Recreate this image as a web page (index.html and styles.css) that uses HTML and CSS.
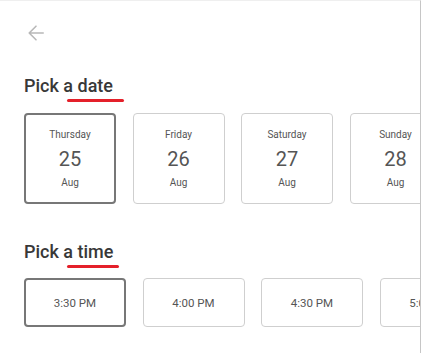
FILE: index.html
```html
<!DOCTYPE html>
<html lang="en">
<head>
    <meta charset="UTF-8">
    <meta name="viewport" content="width=device-width, initial-scale=1.0">
    <title>Book a slot</title>
    <link rel="stylesheet" href="styles.css">
</head>
<body>

    <div class="screen">
        <button class="back" aria-label="Back">
            <svg width="16" height="16" viewBox="0 0 16 16" fill="none" stroke="currentColor" stroke-width="1.6" stroke-linecap="round" stroke-linejoin="round">
                <path d="M15.2 8H1.2M8 1.2L1.2 8L8 14.8"/>
            </svg>
        </button>

        <div class="section date-section">
            <h2 class="title">Pick <span class="mark">a date</span></h2>
            <div class="row">
                <div class="card date selected"><span class="day">Thursday</span><span class="num">25</span><span class="month">Aug</span></div>
                <div class="card date"><span class="day">Friday</span><span class="num">26</span><span class="month">Aug</span></div>
                <div class="card date"><span class="day">Saturday</span><span class="num">27</span><span class="month">Aug</span></div>
                <div class="card date"><span class="day">Sunday</span><span class="num">28</span><span class="month">Aug</span></div>
            </div>
        </div>

        <div class="section time-section">
            <h2 class="title">Pick <span class="mark mark-short">a time</span></h2>
            <div class="row">
                <div class="card time selected">3:30 PM</div>
                <div class="card time">4:00 PM</div>
                <div class="card time">4:30 PM</div>
                <div class="card time">5:00 PM</div>
            </div>
        </div>
    </div>

</body>
</html>
```

FILE: styles.css
```css
body { margin: 0; font-family: Roboto, "Liberation Sans", sans-serif; background: #fff; }
.screen { box-sizing: border-box; width: 421px; height: 353px; overflow: hidden; border-top: 1px solid #efefef; border-right: 1px solid #c6c6c6; padding-left: 24px; }
.back { display: block; margin: 24px 0 0 4px; padding: 0; border: 0; background: none; color: #b8b8b8; height: 16px; cursor: pointer; }
.back svg { display: block; }
.title { margin: 33px 0 0; font-size: 18px; line-height: 24px; font-weight: 500; color: #383838; }
.mark { position: relative; }
.mark::after { content: ""; position: absolute; left: 4px; right: -11px; bottom: -6px; height: 3px; border-radius: 2px; background: #e4202a; }
.mark-short::after { right: -6px; }
.row { display: flex; gap: 16.5px; margin-top: 15px; }
.card { box-sizing: border-box; flex: none; border: 1px solid #cfcfcf; border-radius: 4px; color: #555; display: flex; flex-direction: column; align-items: center; justify-content: center; }
.card.selected { border: 2px solid #777; }
.date { width: 92px; height: 91px; gap: 6px; }
.day, .month { font-size: 10px; line-height: 12px; }
.num { font-size: 20px; line-height: 24px; }
.time-section .title { margin-top: 36px; }
.time-section .row { margin-top: 14px; }
.time { width: 102px; height: 49px; font-size: 11.5px; }
```
